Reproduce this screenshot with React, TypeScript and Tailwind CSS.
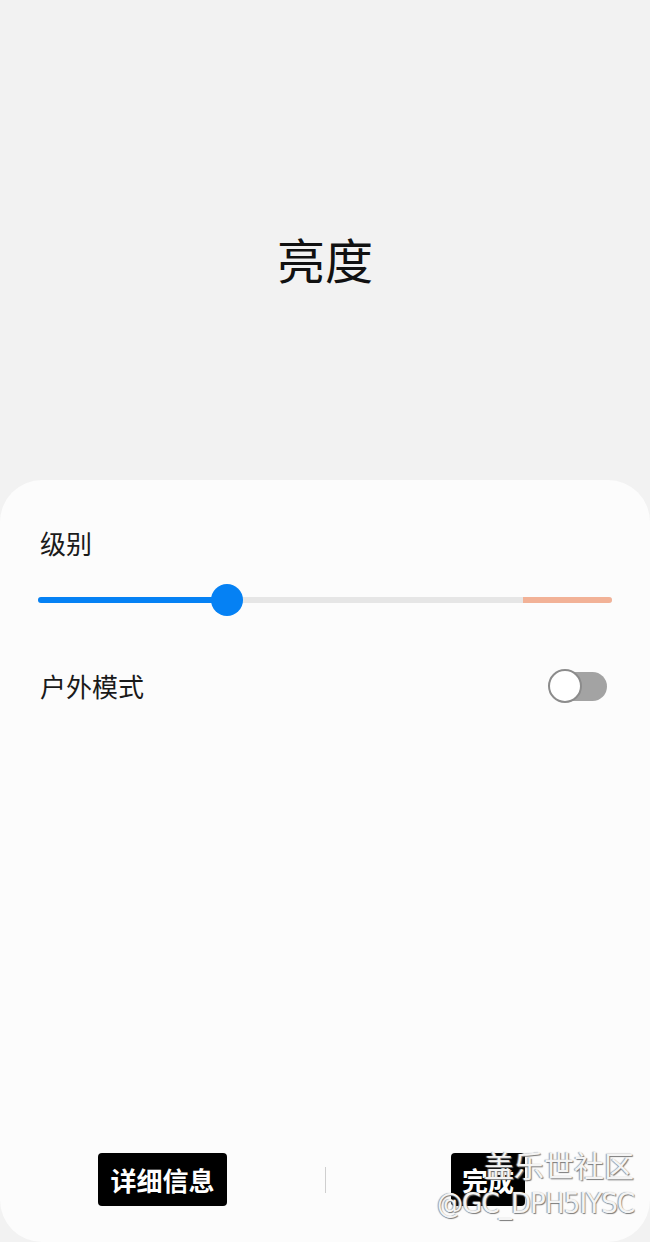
import React from 'react';

const cjk = { fontFamily: '"Noto Sans CJK SC", "Noto Sans", sans-serif' };

const Slider: React.FC<{ value: number }> = ({ value }) => {
  return (
    <div className="relative h-[34px] mx-[38px] flex items-center">
      <div className="flex w-full h-[6px] rounded-full overflow-hidden bg-[#e6e6e6]">
        <div className="bg-[#0581f4]" style={{ width: `${value}%` }} />
        <div className="flex-1" />
        <div className="w-[89px] bg-[#f2b297]" />
      </div>
      <div
        className="absolute top-[1px] w-[32px] h-[32px] -ml-[16px] rounded-full bg-[#0581f4]"
        style={{ left: `${value}%` }}
      />
    </div>
  );
};

const Toggle: React.FC = () => (
  <div className="relative w-[59px] h-[34px] flex items-center">
    <div className="absolute right-0 w-[48px] h-[29px] rounded-full bg-[#a3a3a3]" />
    <div className="relative w-[34px] h-[34px] rounded-full bg-white border-[2px] border-[#8c8c8c]" />
  </div>
);

export default function App() {
  return (
    <div className="w-[650px] h-[1242px] bg-[#f2f2f2] flex flex-col overflow-hidden" style={cjk}>
      <div className="h-[480px] flex justify-center pt-[228px]">
        <h1 className="text-[48px] leading-[60px] text-[#111]">亮度</h1>
      </div>

      <div className="flex-1 bg-[#fcfcfc] rounded-[42px] flex flex-col">
        <div className="px-[40px] pt-[44px] text-[26px] leading-[38px] text-[#1a1a1a]">级别</div>
        <div className="mt-[21px]">
          <Slider value={33} />
        </div>
        <div className="mt-[50px] pl-[40px] pr-[43px] flex items-center justify-between">
          <span className="text-[26px] leading-[38px] text-[#1a1a1a]">户外模式</span>
          <Toggle />
        </div>

        <div className="flex-1" />

        <div className="relative h-[53px] mb-[36px] flex items-center">
          <div className="w-[325px] flex justify-center">
            <span className="bg-black text-white font-bold text-[26px] leading-[53px] px-[12px] rounded-[4px]">
              详细信息
            </span>
          </div>
          <div className="w-[1px] h-[26px] bg-[#cfcfcf]" />
          <div className="flex-1 flex justify-center">
            <span className="bg-black text-white font-bold text-[26px] leading-[53px] px-[11px] rounded-[4px]">
              完成
            </span>
          </div>
          <div className="absolute right-[16px] -top-[7px] flex flex-col items-end text-[#f4f4f4] [text-shadow:1px_1px_1px_#7a7a7a,-1px_0_1px_#9a9a9a]">
            <span className="text-[30px] leading-[36px]">盖乐世社区</span>
            <span
              className="mt-[4px] text-[29px] leading-[34px] tracking-[-1px] origin-right scale-x-[0.9]"
              style={{ fontFamily: '"DejaVu Sans", sans-serif' }}
            >
              @GC_DPH5IYSC
            </span>
          </div>
        </div>
      </div>
    </div>
  );
}
